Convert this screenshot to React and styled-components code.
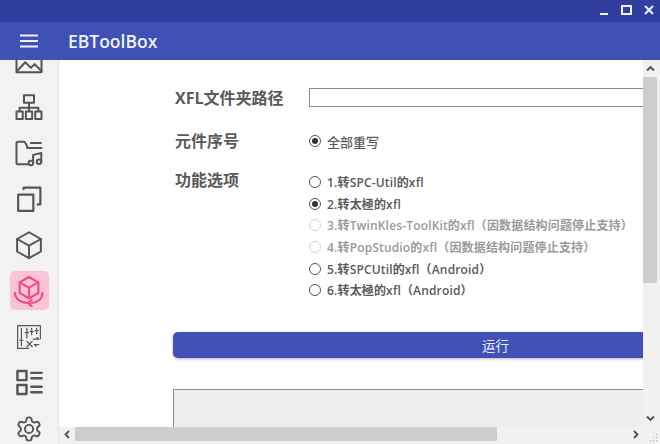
import styled, { createGlobalStyle } from "styled-components";

const GlobalStyle = createGlobalStyle`
  html, body {
    margin: 0;
    padding: 0;
    height: 100%;
    overflow: hidden;
  }
  #root {
    height: 100%;
  }
  * {
    box-sizing: border-box;
  }
`;

const Window = styled.div`
  width: 660px;
  height: 444px;
  display: flex;
  flex-direction: column;
  background: #fff;
  font-family: "Open Sans", "Noto Sans CJK SC", sans-serif;
  overflow: hidden;
`;

const TitleBar = styled.div`
  height: 22px;
  flex: none;
  background: #303f9f;
  display: flex;
  justify-content: flex-end;
  align-items: center;
  gap: 12px;
  padding: 0 6px 2px 0;
  color: #f2f4ff;
`;

const ToolBar = styled.div`
  height: 38px;
  flex: none;
  background: #3f51b5;
  display: flex;
  align-items: center;
  color: #eef1ff;
`;

const MenuButton = styled.div`
  width: 58px;
  padding-left: 20px;
  display: flex;
  align-items: center;
`;

const AppTitle = styled.div`
  margin-left: 10px;
  font-size: 17.5px;
  font-weight: 600;
`;

const Body = styled.div`
  flex: 1;
  min-height: 0;
  display: flex;
`;

const SideBar = styled.div`
  width: 59px;
  flex: none;
  background: #f2f2f2;
  overflow: hidden;
  border-right: 1px solid #e8e8e8;
`;

const SideList = styled.div`
  margin-top: -19px;
  display: flex;
  flex-direction: column;
  align-items: center;
  gap: 7px;
`;

const SideItem = styled.div`
  width: 39px;
  height: 39px;
  flex: none;
  display: flex;
  align-items: center;
  justify-content: center;
  border-radius: 5px;
  color: ${(p) => (p.$active ? "#ee4a85" : "#555")};
  background: ${(p) => (p.$active ? "#fbc4d6" : "transparent")};
`;

const Main = styled.div`
  flex: 1;
  min-width: 0;
  display: grid;
  grid-template-columns: 1fr 17px;
  grid-template-rows: 1fr 17px;
`;

const Viewport = styled.div`
  overflow: hidden;
  min-width: 0;
  min-height: 0;
  padding: 18px 0 0 114px;
  background: #fff;
`;

const Form = styled.div`
  width: 600px;
`;

const Row = styled.div`
  display: flex;
  align-items: ${(p) => (p.$top ? "flex-start" : "center")};
  height: ${(p) => p.$h}px;
  padding-top: ${(p) => (p.$top ? 5 : 0)}px;
`;

const Label = styled.div`
  width: 136px;
  padding-left: 2px;
  flex: none;
  font-size: 16px;
  font-weight: 700;
  color: #5a5a5a;
  line-height: 20px;
`;

const PathInput = styled.div`
  width: 400px;
  height: 19px;
  border: 1px solid #8c8c8c;
  background: #fff;
`;

const RadioGroup = styled.div`
  display: flex;
  flex-direction: column;
  padding-top: 1px;
`;

const RadioRow = styled.div`
  height: 21.7px;
  display: flex;
  align-items: center;
  gap: 6px;
  font-size: ${(p) => (p.$large ? 13 : 12)}px;
  letter-spacing: ${(p) => (p.$large ? 0 : 0.16)}px;
  font-weight: ${(p) => (p.$large ? 500 : 600)};
  white-space: nowrap;
  color: ${(p) => (p.$disabled ? "#9a9a9a" : "#5a5a5a")};
`;

const RadioDot = styled.span`
  width: 12px;
  height: 12px;
  flex: none;
  border-radius: 50%;
  border: 1px solid ${(p) => (p.$disabled ? "#d4d4d4" : "#555")};
  display: flex;
  align-items: center;
  justify-content: center;
  &::after {
    content: "";
    width: 6px;
    height: 6px;
    border-radius: 50%;
    background: ${(p) => (p.$checked ? "#333" : "transparent")};
  }
`;

const RunButton = styled.div`
  width: 600px;
  height: 26px;
  background: #3f51b5;
  border-radius: 5px;
  box-shadow: 0 1px 3px rgba(0, 0, 0, 0.3);
  color: #e8ebff;
  font-size: 13.5px;
  display: flex;
  align-items: center;
  padding-left: 309px;
`;

const OutputBox = styled.div`
  margin-top: 31px;
  width: 600px;
  height: 120px;
  background: #eeeeee;
  border: 1px solid #8c8c8c;
`;

const VScroll = styled.div`
  background: #f1f1f1;
  display: flex;
  flex-direction: column;
  align-items: flex-start;
`;

const VThumb = styled.div`
  width: 14px;
  height: 206px;
  background: #cdcdcd;
  flex: none;
`;

const HScroll = styled.div`
  background: #f1f1f1;
  display: flex;
  align-items: flex-start;
`;

const HThumb = styled.div`
  width: 422px;
  height: 14px;
  background: #cdcdcd;
  flex: none;
`;

const Arrow = styled.div`
  width: ${(p) => (p.$vertical ? 14 : 16)}px;
  height: ${(p) => (p.$vertical ? 17 : 14)}px;
  flex: none;
  display: flex;
  align-items: center;
  justify-content: center;
  color: #505050;
`;

const Spacer = styled.div`
  flex: 1;
`;

const Corner = styled.div`
  background: #f1f1f1;
  display: flex;
  align-items: flex-end;
  justify-content: flex-end;
  padding: 0 2px 2px 0;
`;

const Icon = ({ children, size = 30, box = 24 }) => (
  <svg
    width={size}
    height={size}
    viewBox={`0 0 ${box} ${box}`}
    fill="none"
    stroke="currentColor"
    strokeWidth="1.6"
    strokeLinecap="round"
    strokeLinejoin="round"
  >
    {children}
  </svg>
);

const ImageIcon = () => (
  <Icon>
    <path d="M2 3h20v18H2z" />
    <path d="M2.500 20l6.500-7 4.500 4.500 3-3 5.500 5.500" />
  </Icon>
);

const TreeIcon = () => (
  <Icon>
    <path d="M8 2.500h8v6H8z" />
    <path d="M12 8.500v4M4.500 15v-2.500h15V15M12 12.500V15" />
    <path d="M2 15.500h5v6H2zM9.500 15.500h5v6h-5zM17 15.500h5v6h-5z" />
  </Icon>
);

const MusicFolderIcon = () => (
  <Icon>
    <path d="M11 21H3.500A1.500 1.500 0 0 1 2 19.500v-15A1.500 1.500 0 0 1 3.500 3h4.200c.6 0 1 .3 1.300.8L10.500 6.500V8H22" />
    <path d="M13.500 4h8" />
    <circle cx="13.500" cy="20" r="1.800" />
    <circle cx="20" cy="19" r="1.800" />
    <path d="M15.300 20v-6.500l6.500-1.500V19" />
  </Icon>
);

const CopyIcon = () => (
  <Icon size={26}>
    <path d="M2 8h14v15H2z" strokeWidth="2" />
    <path d="M7 3V1.500h15.500V17H20" strokeWidth="2" />
  </Icon>
);

const BoxIcon = () => (
  <Icon>
    <path d="M12 1.800l9.500 5.400v10L12 22.500l-9.500-5.300v-10z" />
    <path d="M2.500 7.200L12 12.500l9.500-5.300M12 12.500v10" />
  </Icon>
);

const BoxSyncIcon = () => (
  <Icon size={32}>
    <path d="M12 1.500l7 4v8l-7 4-7-4v-8z" />
    <path d="M5 5.500l7 4 7-4M12 9.500v8" />
    <path d="M1.500 13.500c0 4 4 7.500 10 7.500M22 13.500c0 4-3 7-8 7.500" />
    <path d="M14 18.500L11.500 21l2.500 2.500" />
  </Icon>
);

const MixerIcon = () => (
  <Icon size={26}>
    <path d="M1.500 1.500h21v12M1.500 1.500v21h10" strokeWidth="1.100" />
    <path d="M5 4v16M3.500 15h3M10 4v9M8.500 8h3M14.500 4v6M13 7h3M19 4v5M17.500 6h3" strokeWidth="1.100" />
    <path d="M10 16l5 5M15 16l-5 5M16 14h5l-1.500-1.500M21 19h-4l1.500 1.500" strokeWidth="1.100" />
  </Icon>
);

const ListIcon = () => (
  <Icon size={29}>
    <path d="M2 2.500h7.500V10H2zM2 14h7.500v7.500H2z" strokeWidth="2" />
    <path d="M13.500 4h8.500M13.500 8.500h8.500M13.500 15.500h8.500M13.500 20h8.500" strokeWidth="2" />
  </Icon>
);

const GearIcon = () => (
  <Icon size={28}>
    <path d="M12.220 2h-.440a2 2 0 0 0-2 2v.180a2 2 0 0 1-1 1.730l-.430.250a2 2 0 0 1-2 0l-.150-.080a2 2 0 0 0-2.730.730l-.220.380a2 2 0 0 0 .730 2.730l.150.100a2 2 0 0 1 1 1.720v.510a2 2 0 0 1-1 1.740l-.150.090a2 2 0 0 0-.730 2.730l.220.380a2 2 0 0 0 2.730.730l.150-.080a2 2 0 0 1 2 0l.430.250a2 2 0 0 1 1 1.730V20a2 2 0 0 0 2 2h.440a2 2 0 0 0 2-2v-.180a2 2 0 0 1 1-1.730l.430-.250a2 2 0 0 1 2 0l.150.080a2 2 0 0 0 2.730-.730l.220-.390a2 2 0 0 0-.730-2.730l-.150-.080a2 2 0 0 1-1-1.740v-.500a2 2 0 0 1 1-1.740l.150-.090a2 2 0 0 0 .730-2.730l-.220-.380a2 2 0 0 0-2.730-.730l-.150.080a2 2 0 0 1-2 0l-.430-.250a2 2 0 0 1-1-1.730V4a2 2 0 0 0-2-2z" />
    <circle cx="12" cy="12" r="3.500" />
  </Icon>
);

const Chevron = ({ d }) => (
  <svg width="9" height="9" viewBox="0 0 9 9" fill="none" stroke="currentColor" strokeWidth="1.800">
    <path d={d} />
  </svg>
);

const sideItems = [
  { key: "image", icon: <ImageIcon /> },
  { key: "tree", icon: <TreeIcon /> },
  { key: "music", icon: <MusicFolderIcon /> },
  { key: "copy", icon: <CopyIcon /> },
  { key: "box", icon: <BoxIcon /> },
  { key: "sync", icon: <BoxSyncIcon />, active: true },
  { key: "mixer", icon: <MixerIcon /> },
  { key: "list", icon: <ListIcon /> },
  { key: "gear", icon: <GearIcon /> },
];

const options = [
  { text: "1.转SPC-Util的xfl" },
  { text: "2.转太極的xfl", checked: true },
  { text: "3.转TwinKles-ToolKit的xfl（因数据结构问题停止支持）", disabled: true },
  { text: "4.转PopStudio的xfl（因数据结构问题停止支持）", disabled: true },
  { text: "5.转SPCUtil的xfl（Android）" },
  { text: "6.转太極的xfl（Android）" },
];

const App = () => {
  return (
    <Window>
      <GlobalStyle />
      <TitleBar>
        <svg width="10" height="10" viewBox="0 0 10 10" stroke="currentColor" strokeWidth="2" fill="none">
          <path d="M1 9h8" />
        </svg>
        <svg width="11" height="10" viewBox="0 0 11 10" stroke="currentColor" strokeWidth="2" fill="none">
          <path d="M1 1h9v8H1z" />
        </svg>
        <svg width="10" height="10" viewBox="0 0 10 10" stroke="currentColor" strokeWidth="2" fill="none">
          <path d="M1 1l8 8M9 1l-8 8" />
        </svg>
      </TitleBar>
      <ToolBar>
        <MenuButton>
          <svg width="18" height="14" viewBox="0 0 18 14" stroke="currentColor" strokeWidth="1.800" fill="none">
            <path d="M0 1.500h18M0 7h18M0 12.500h18" />
          </svg>
        </MenuButton>
        <AppTitle>EBToolBox</AppTitle>
      </ToolBar>
      <Body>
        <SideBar>
          <SideList>
            {sideItems.map((item) => (
              <SideItem key={item.key} $active={item.active}>
                {item.icon}
              </SideItem>
            ))}
          </SideList>
        </SideBar>
        <Main>
          <Viewport>
            <Form>
              <Row $h={39}>
                <Label>XFL文件夹路径</Label>
                <PathInput />
              </Row>
              <Row $h={48}>
                <Label>元件序号</Label>
                <RadioRow $large>
                  <RadioDot $checked />
                  全部重写
                </RadioRow>
              </Row>
              <Row $top $h={167}>
                <Label>功能选项</Label>
                <RadioGroup>
                  {options.map((o) => (
                    <RadioRow key={o.text} $disabled={o.disabled}>
                      <RadioDot $checked={o.checked} $disabled={o.disabled} />
                      {o.text}
                    </RadioRow>
                  ))}
                </RadioGroup>
              </Row>
              <RunButton>运行</RunButton>
              <OutputBox />
            </Form>
          </Viewport>
          <VScroll>
            <Arrow $vertical>
              <Chevron d="M1 6.500l3.500-3.500 3.500 3.500" />
            </Arrow>
            <VThumb />
            <Spacer />
            <Arrow $vertical>
              <Chevron d="M1 2.500l3.500 3.500 3.500-3.500" />
            </Arrow>
          </VScroll>
          <HScroll>
            <Arrow>
              <Chevron d="M6 1L2.500 4.500 6 8" />
            </Arrow>
            <HThumb />
            <Spacer />
            <Arrow>
              <Chevron d="M3 1l3.500 3.500L3 8" />
            </Arrow>
          </HScroll>
          <Corner>
            <svg width="9" height="9" viewBox="0 0 9 9" fill="#a8a8a8">
              <path d="M7 1h1v1H7zM4 4h1v1H4zM7 4h1v1H7zM1 7h1v1H1zM4 7h1v1H4zM7 7h1v1H7z" />
            </svg>
          </Corner>
        </Main>
      </Body>
    </Window>
  );
};

export default App;
